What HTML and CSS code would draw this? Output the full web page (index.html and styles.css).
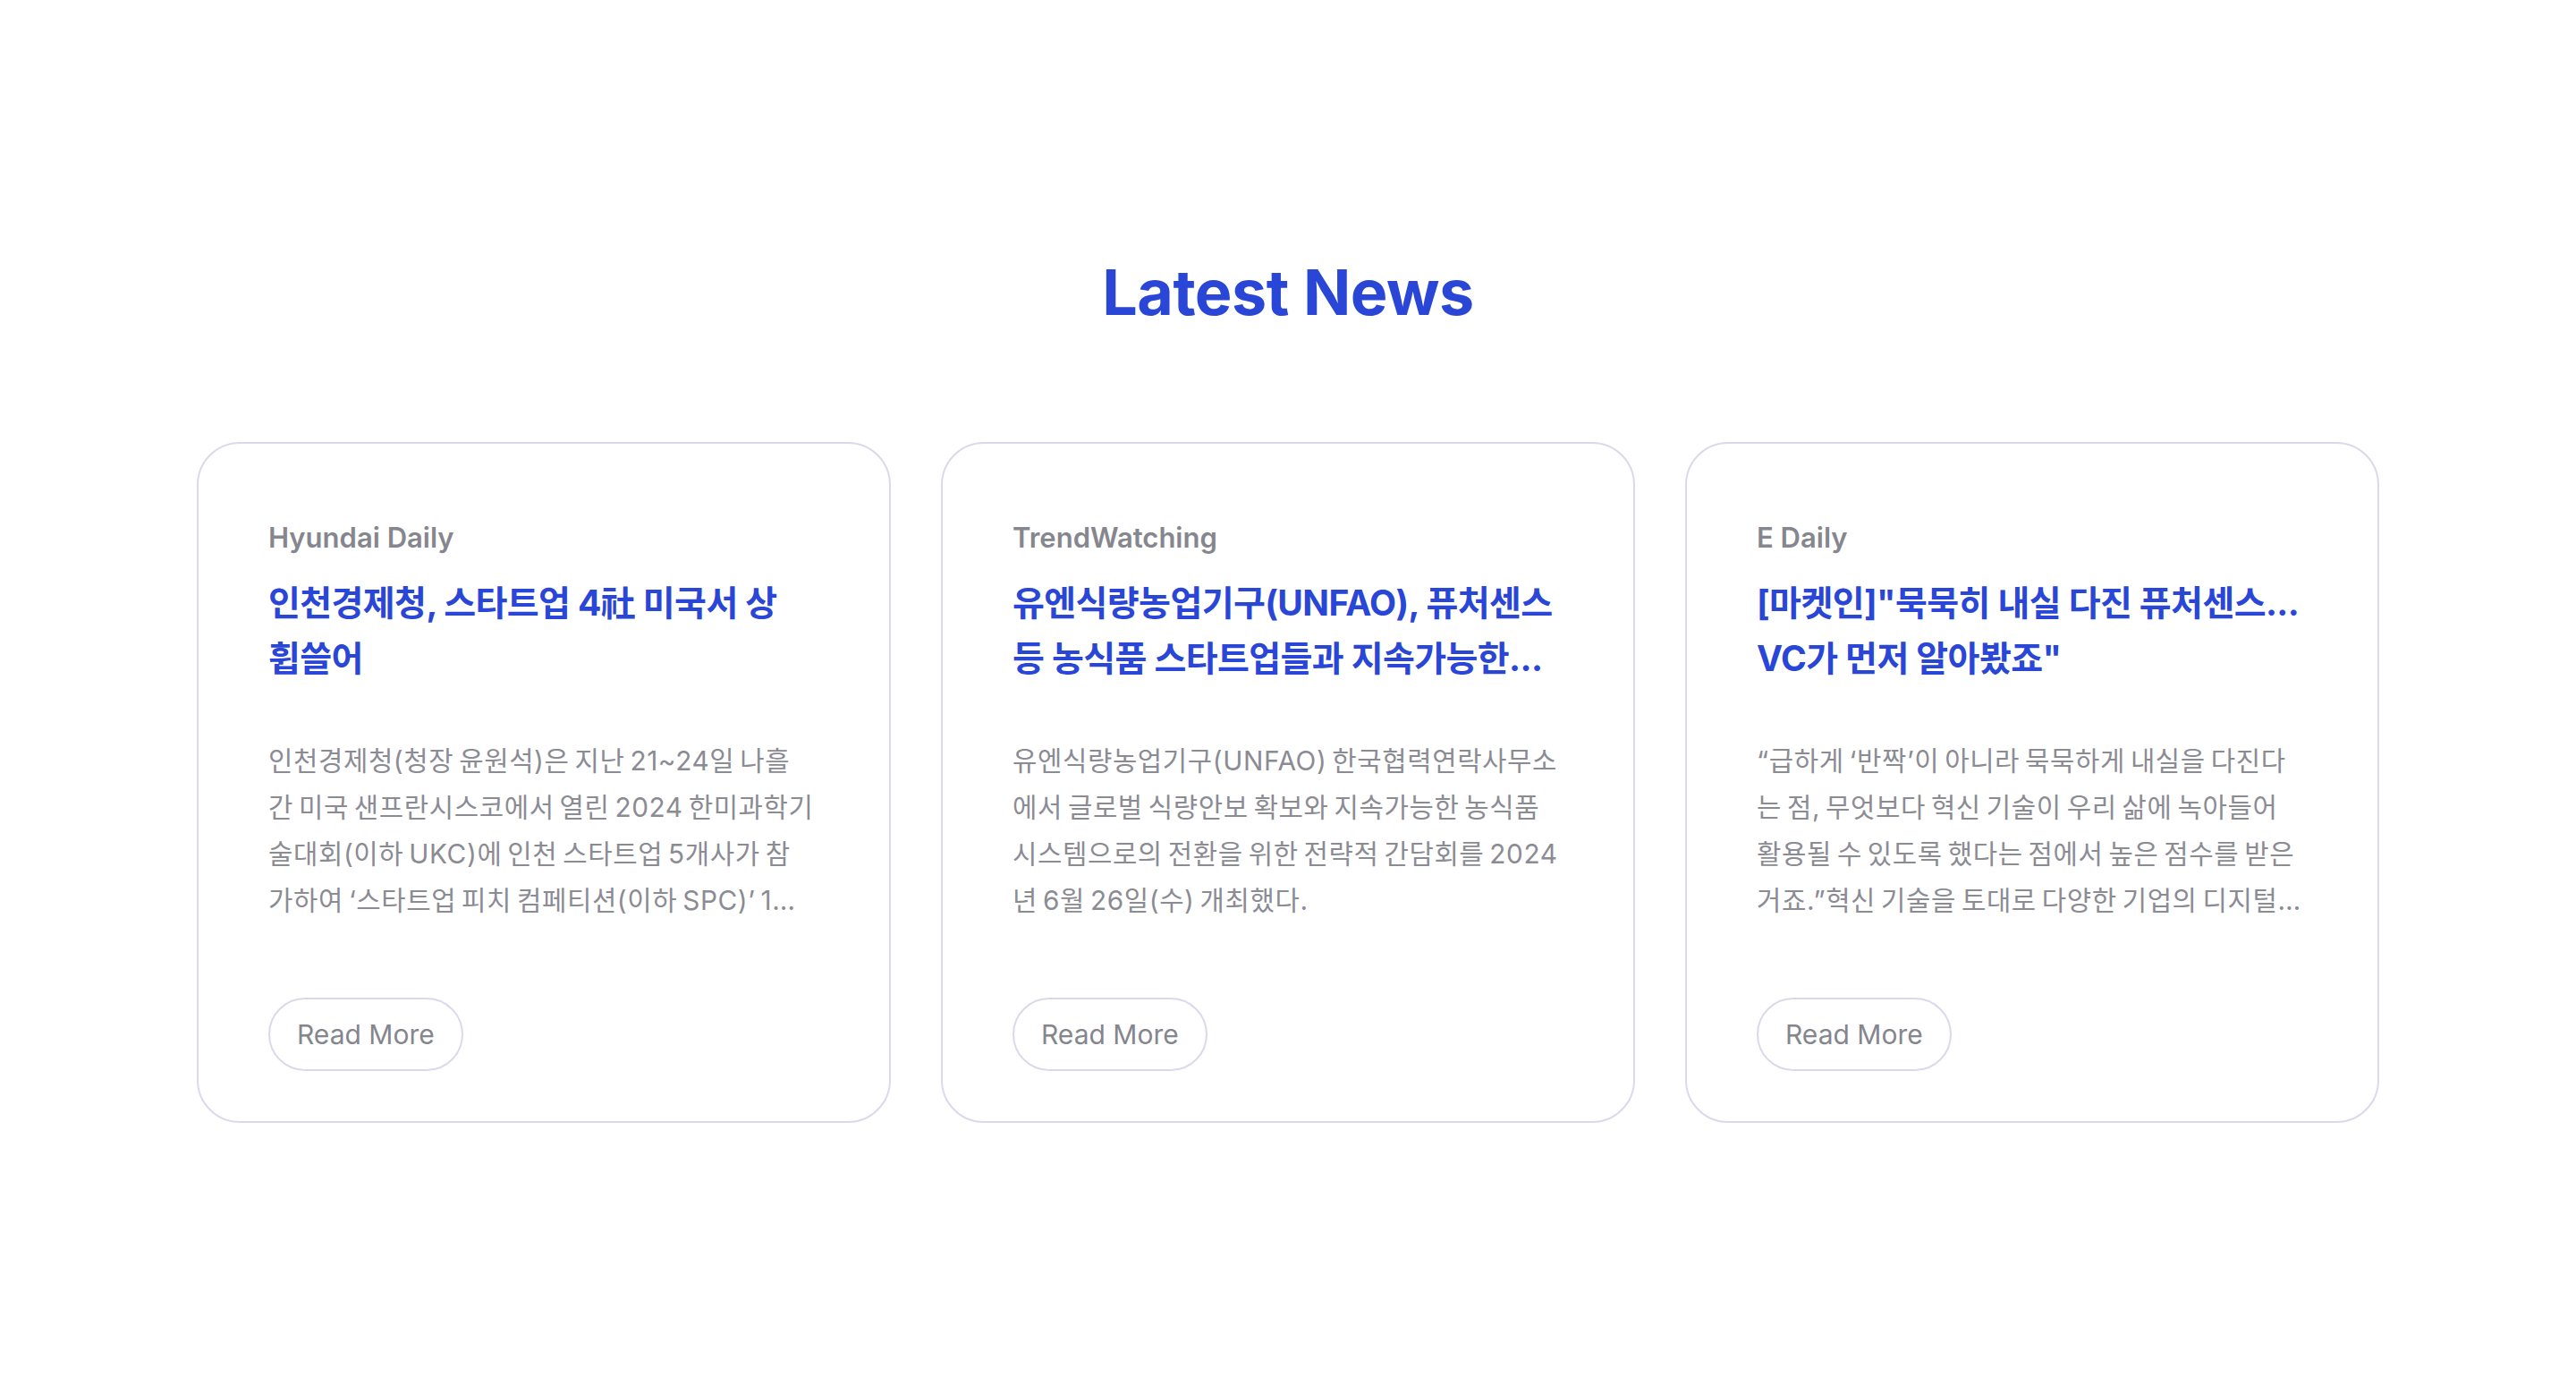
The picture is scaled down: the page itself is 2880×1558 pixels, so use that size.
FILE: index.html
```html
<!DOCTYPE html>
<html lang="ko">
<head>
<meta charset="utf-8">
<title>Latest News</title>
<link rel="stylesheet" href="styles.css">
</head>
<body>
<section class="news">
  <h2 class="news-title">Latest News</h2>
  <div class="cards">
    <article class="card">
      <div class="card-source">Hyundai Daily</div>
      <h3 class="card-title">인천경제청, 스타트업 4社 미국서 상 휩쓸어</h3>
      <p class="card-desc">인천경제청(청장 윤원석)은 지난 21~24일 나흘간 미국 샌프란시스코에서 열린 2024 한미과학기술대회(이하 UKC)에 인천 스타트업 5개사가 참가하여 ‘스타트업 피치 컴페티션(이하 SPC)’ 1위를 비롯해 다수의 상을 수상하는 성과를 거뒀다고 밝혔다.</p>
      <a class="card-btn" href="#">Read More</a>
    </article>
    <article class="card">
      <div class="card-source">TrendWatching</div>
      <h3 class="card-title">유엔식량농업기구(UNFAO), 퓨처센스 등 농식품 스타트업들과 지속가능한...</h3>
      <p class="card-desc">유엔식량농업기구(UNFAO) 한국협력연락사무소에서 글로벌 식량안보 확보와 지속가능한 농식품 시스템으로의 전환을 위한 전략적 간담회를 2024년 6월 26일(수) 개최했다.</p>
      <a class="card-btn" href="#">Read More</a>
    </article>
    <article class="card">
      <div class="card-source">E Daily</div>
      <h3 class="card-title">[마켓인]"묵묵히 내실 다진 퓨처센스... VC가 먼저 알아봤죠"</h3>
      <p class="card-desc">“급하게 ‘반짝’이 아니라 묵묵하게 내실을 다진다는 점, 무엇보다 혁신 기술이 우리 삶에 녹아들어 활용될 수 있도록 했다는 점에서 높은 점수를 받은 거죠.”혁신 기술을 토대로 다양한 기업의 디지털 전환을 이끌고 있는 퓨처센스에 대한 투자 업계의 평가다.</p>
      <a class="card-btn" href="#">Read More</a>
    </article>
  </div>
</section>
</body>
</html>
```
FILE: styles.css
```css
* {
  box-sizing: border-box;
}

html, body {
  margin: 0;
  padding: 0;
  background: #ffffff;
}

body {
  font-family: Inter, "Noto Sans CJK KR", sans-serif;
  color: #8a8a93;
}

.news {
  padding: 285px 220px 0;
}

.news-title {
  margin: 0;
  text-align: center;
  font-size: 70px;
  line-height: 84px;
  font-weight: 700;
  color: #2946d6;
  letter-spacing: -0.5px;
}

.cards {
  margin-top: 125px;
  display: grid;
  grid-template-columns: repeat(3, 1fr);
  gap: 56px;
}

.card {
  display: flex;
  flex-direction: column;
  align-items: stretch;
  border: 2px solid #dad9eb;
  border-radius: 48px;
  padding: 81px 83.7px 56px 78px;
  background: #ffffff;
}

.card-source {
  font-size: 31px;
  line-height: 48px;
  font-weight: 600;
  color: #86868f;
}

.card-title {
  margin: 18px 0 0;
  font-size: 39px;
  line-height: 62px;
  font-weight: 700;
  letter-spacing: -0.6px;
  color: #2946d6;
  display: -webkit-box;
  -webkit-line-clamp: 2;
  -webkit-box-orient: vertical;
  overflow: hidden;
}

.card-desc {
  margin: 57px 0 0;
  font-size: 29.75px;
  line-height: 52px;
  font-weight: 400;
  letter-spacing: 0.6px;
  word-spacing: -3px;
  color: #8b8b94;
  display: -webkit-box;
  -webkit-line-clamp: 4;
  -webkit-box-orient: vertical;
  overflow: hidden;
}

.card-btn {
  align-self: flex-start;
  margin-top: 83px;
  display: inline-flex;
  align-items: center;
  height: 82px;
  padding: 0 30px;
  border: 2px solid #dad9eb;
  border-radius: 999px;
  font-size: 30px;
  color: #85858e;
  text-decoration: none;
  background: #ffffff;
}
```
